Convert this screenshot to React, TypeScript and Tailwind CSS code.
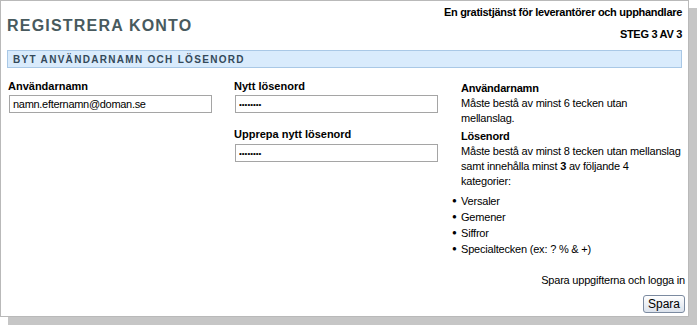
import React from 'react';

const RULES = ['Versaler', 'Gemener', 'Siffror', 'Specialtecken (ex: ? % & +)'];

const App: React.FC = () => {
  return (
    <div className="w-[700px] h-[325px] bg-white font-['Liberation_Sans',Arial,sans-serif] text-[11px] text-black">
      {/* Card with drop shadow */}
      <div className="w-[689px] h-[317px] border border-[#b9b9b9] bg-white shadow-[8px_8px_0_#c6c6c6] flex flex-col">
        {/* Header */}
        <div className="flex justify-between px-[6px] pt-[5px] h-[48px]">
          <h1 className="pt-[12px] text-[16px] font-bold tracking-[1.2px] text-[#485a5e] leading-none">REGISTRERA KONTO</h1>
          <div className="text-right font-bold leading-[13px] tracking-[-0.3px]">
            <p>En gratistjänst för leverantörer och upphandlare</p>
            <p className="mt-[9px]">STEG 3 AV 3</p>
          </div>
        </div>

        {/* Section bar */}
        <div className="mx-[6px] mt-[1px] h-[18px] border border-[#a9c8e6] bg-[#d9ebfc] flex items-center px-[5px]">
          <span className="text-[10px] font-bold tracking-[1.3px] text-[#34495a]">BYT ANVÄNDARNAMN OCH LÖSENORD</span>
        </div>

        {/* Form */}
        <div className="flex px-[7px] pt-[12px]">
          <div className="w-[226px]">
            <label className="block font-bold leading-[13px]">Användarnamn</label>
            <input
              readOnly
              value="namn.efternamn@doman.se"
              className="mt-[2px] ml-[1px] w-[203px] h-[18px] border border-[#a5a5a5] px-[3px] text-[11px] tracking-[-0.3px] outline-none"
            />
          </div>
          <div className="w-[227px]">
            <label className="block font-bold leading-[13px]">Nytt lösenord</label>
            <input
              readOnly
              type="password"
              value="12345678"
              className="mt-[2px] ml-[1px] w-[203px] h-[18px] border border-[#a5a5a5] px-[3px] text-[8px] outline-none"
            />
            <label className="block font-bold leading-[13px] mt-[15px]">Upprepa nytt lösenord</label>
            <input
              readOnly
              type="password"
              value="12345678"
              className="mt-[3px] ml-[1px] w-[203px] h-[18px] border border-[#a5a5a5] px-[3px] text-[8px] outline-none"
            />
          </div>
          <div className="flex-1 pt-[1px] leading-[15px] tracking-[-0.2px]">
            <p className="font-bold">Användarnamn</p>
            <p>Måste bestå av minst 6 tecken utan<br />mellanslag.</p>
            <p className="font-bold mt-[3px]">Lösenord</p>
            <p>
              Måste bestå av minst 8 tecken utan mellanslag<br />
              samt innehålla minst <b>3</b> av följande 4<br />
              kategorier:
            </p>
            <ul className="mt-[4px] ml-[-9px] leading-[16px]">
              {RULES.map(r => (
                <li key={r} className="flex items-center">
                  <span className="w-[9px] text-[8px]">●</span>
                  <span>{r}</span>
                </li>
              ))}
            </ul>
          </div>
        </div>

        {/* Footer */}
        <div className="mt-auto flex flex-col items-end px-[3px] pb-[3px]">
          <p className="tracking-[-0.2px]">Spara uppgifterna och logga in</p>
          <button className="mt-[7px] h-[18px] px-[4px] rounded-[3px] border border-[#7b8aa0] bg-gradient-to-b from-white to-[#dbe2ec] text-[12px] leading-none">
            Spara
          </button>
        </div>
      </div>
    </div>
  );
};

export default App;
